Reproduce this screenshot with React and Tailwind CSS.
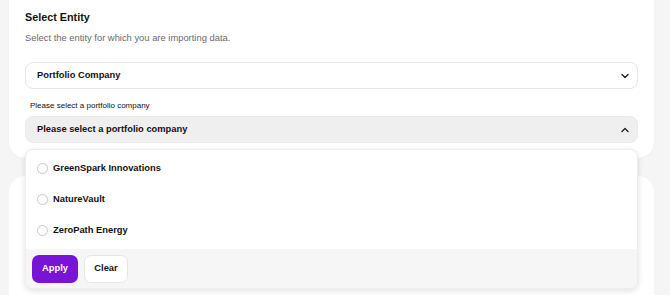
import React from 'react';
import { ChevronDown, ChevronUp } from 'lucide-react';

const companies = ['GreenSpark Innovations', 'NatureVault', 'ZeroPath Energy'];

export default function App() {
    return (
        <div className="h-[295px] w-full overflow-hidden bg-[#f5f5f5] pl-[9px] pr-[16px] font-['Liberation_Sans',Arial,sans-serif] text-[#111]">
            {/* entity card */}
            <div className="rounded-b-[16px] bg-white px-[16px] pt-[9px] pb-[15px] shadow-[0_1px_2px_rgba(0,0,0,0.03)]">
                <h2 className="text-[10.8px] font-bold leading-[16px]">Select Entity</h2>
                <p className="mt-[6px] text-[9.4px] leading-[14px] text-[#6a6a6a]">
                    Select the entity for which you are importing data.
                </p>

                <div className="mt-[17px] flex h-[27px] items-center justify-between rounded-[8px] border border-[#e6e6e6] bg-white pl-[11px] pr-[6px]">
                    <span className="text-[9.33px] font-bold">Portfolio Company</span>
                    <ChevronDown size={12} strokeWidth={2.8} className="text-[#222]" />
                </div>

                <p className="mt-[11px] pl-[5px] text-[8px] leading-[12px] text-[#111]">Please select a portfolio company</p>

                <div className="relative mt-[4px]">
                    <div className="flex h-[27px] items-center justify-between rounded-[8px] border border-[#ebebeb] bg-[#efefef] pl-[11px] pr-[6px]">
                        <span className="text-[9.33px] font-bold">Please select a portfolio company</span>
                        <ChevronUp size={12} strokeWidth={2.8} className="text-[#222]" />
                    </div>

                    {/* dropdown */}
                    <div className="absolute left-0 right-0 top-[33px] z-10 overflow-hidden rounded-[8px] border border-[#ededed] bg-white shadow-[0_2px_6px_rgba(0,0,0,0.12)]">
                        <div className="pt-[3px] pb-[3px]">
                            {companies.map(name => (
                                <div key={name} className="flex h-[31px] items-center gap-[5px] pl-[11px]">
                                    <span className="h-[11px] w-[11px] rounded-full border border-[#c8c8c8] bg-white" />
                                    <span className="text-[9.33px] font-bold">{name}</span>
                                </div>
                            ))}
                        </div>
                        <div className="flex gap-[6px] bg-[#f6f6f6] pt-[6px] pb-[5px] pl-[6px]">
                            <button className="h-[28px] w-[46px] rounded-[7px] bg-[#7913d6] text-[9.33px] font-bold text-white">
                                Apply
                            </button>
                            <button className="h-[28px] w-[44px] rounded-[7px] border border-[#e6e6e6] bg-white text-[9.33px] font-bold text-[#111]">
                                Clear
                            </button>
                        </div>
                    </div>
                </div>
            </div>

            {/* next card, mostly hidden behind the dropdown */}
            <div className="mt-[18px] h-[200px] rounded-t-[16px] bg-white" />
        </div>
    );
}
